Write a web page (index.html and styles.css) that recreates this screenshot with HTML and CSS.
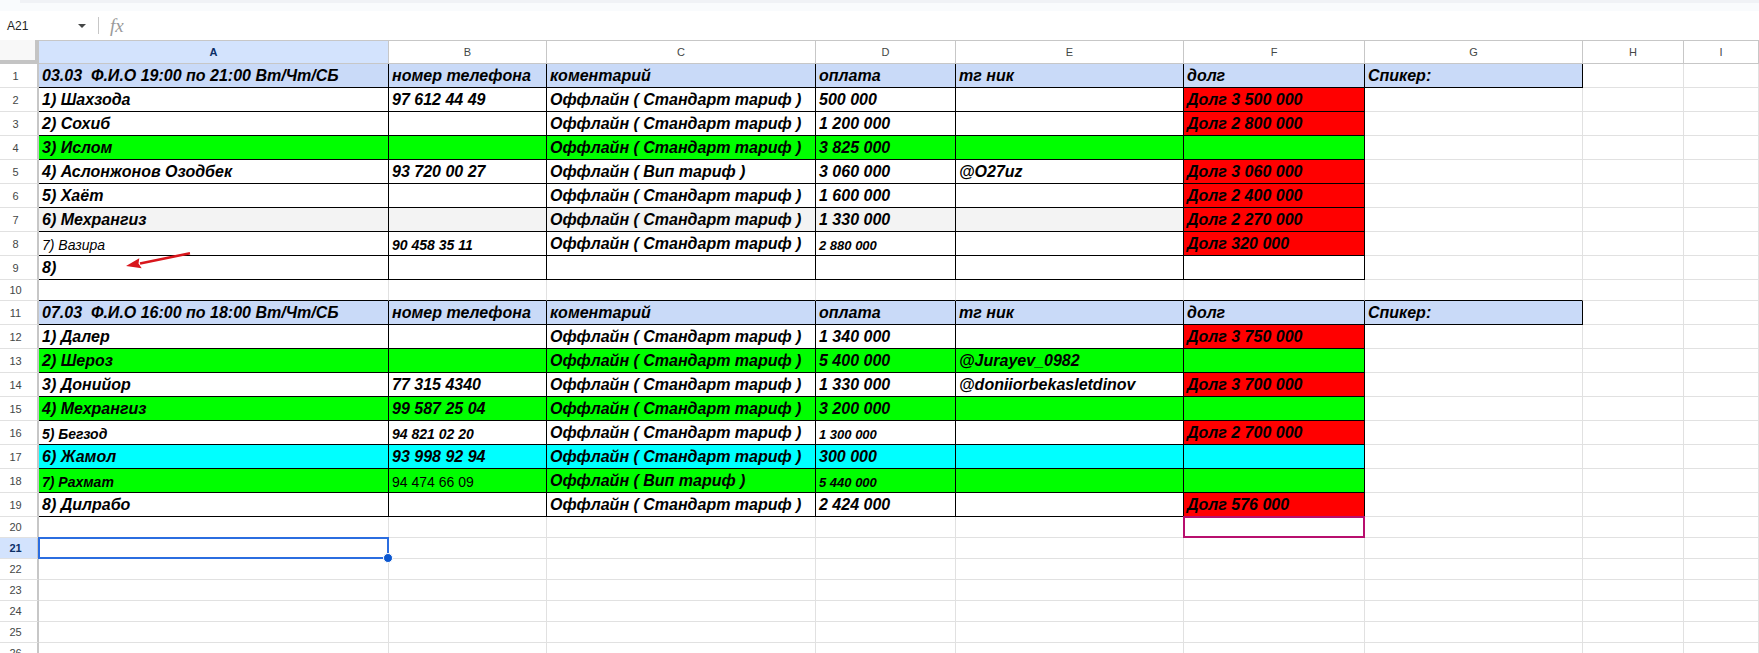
FILE: index.html
```html
<!DOCTYPE html>
<html lang="ru">
<head>
    <meta charset="UTF-8">
    <meta name="viewport" content="width=device-width, initial-scale=1">
    <title>Таблица</title>
    <link rel="stylesheet" href="styles.css">
</head>
<body>
    <div class="top-strip"><div class="top-strip-inner"></div></div>

    <div class="formula-bar">
        <div class="name-box">A21</div>
        <div class="name-arrow"></div>
        <div class="formula-sep"></div>
        <div class="fx">fx</div>
    </div>

    <table class="sheet">
        <colgroup>
            <col class="w-head"><col class="w-a"><col class="w-b"><col class="w-c"><col class="w-d">
            <col class="w-e"><col class="w-f"><col class="w-g"><col class="w-h"><col class="w-i">
        </colgroup>
        <thead>
            <tr>
                <th class="corner"></th>
                <th class="on">A</th><th>B</th><th>C</th><th>D</th><th>E</th><th>F</th><th>G</th><th>H</th><th>I</th>
            </tr>
        </thead>
        <tbody>
            <tr>
                <td class="num">1</td>
                <td class="k blue">03.03&nbsp; Ф.И.О 19:00 по 21:00 Вт/Чт/СБ</td><td class="k blue">номер телефона</td><td class="k blue">коментарий</td><td class="k blue">оплата</td><td class="k blue">тг ник</td><td class="k blue">долг</td><td class="k blue">Спикер:</td><td></td><td></td>
            </tr>
            <tr>
                <td class="num">2</td>
                <td class="k">1) Шахзода</td><td class="k">97 612 44 49</td><td class="k">Оффлайн ( Стандарт тариф )</td><td class="k">500 000</td><td class="k"></td><td class="k red">Долг 3 500 000</td><td></td><td></td><td></td>
            </tr>
            <tr>
                <td class="num">3</td>
                <td class="k">2) Сохиб</td><td class="k"></td><td class="k">Оффлайн ( Стандарт тариф )</td><td class="k">1 200 000</td><td class="k"></td><td class="k red">Долг 2 800 000</td><td></td><td></td><td></td>
            </tr>
            <tr>
                <td class="num">4</td>
                <td class="k green">3) Ислом</td><td class="k green"></td><td class="k green">Оффлайн ( Стандарт тариф )</td><td class="k green">3 825 000</td><td class="k green"></td><td class="k green"></td><td></td><td></td><td></td>
            </tr>
            <tr>
                <td class="num">5</td>
                <td class="k">4) Аслонжонов Озодбек</td><td class="k">93 720 00 27</td><td class="k">Оффлайн ( Вип тариф )</td><td class="k">3 060 000</td><td class="k">@O27uz</td><td class="k red">Долг 3 060 000</td><td></td><td></td><td></td>
            </tr>
            <tr>
                <td class="num">6</td>
                <td class="k">5) Хаёт</td><td class="k"></td><td class="k">Оффлайн ( Стандарт тариф )</td><td class="k">1 600 000</td><td class="k"></td><td class="k red">Долг 2 400 000</td><td></td><td></td><td></td>
            </tr>
            <tr>
                <td class="num">7</td>
                <td class="k grey">6) Мехрангиз</td><td class="k grey"></td><td class="k grey">Оффлайн ( Стандарт тариф )</td><td class="k grey">1 330 000</td><td class="k grey"></td><td class="k red">Долг 2 270 000</td><td></td><td></td><td></td>
            </tr>
            <tr>
                <td class="num">8</td>
                <td class="k small thin">7) Вазира</td><td class="k small">90 458 35 11</td><td class="k">Оффлайн ( Стандарт тариф )</td><td class="k small tiny">2 880 000</td><td class="k"></td><td class="k red">Долг 320 000</td><td></td><td></td><td></td>
            </tr>
            <tr>
                <td class="num">9</td>
                <td class="k has-over">8)
                    <svg class="arrow" width="70" height="18" viewBox="0 0 70 18">
                        <path d="M65 1.3L15 11.5" stroke="#d8161c" stroke-width="2.6" fill="none"/>
                        <path d="M1 14L14.3 6.3L13.5 11.5L16.7 16.3Z" fill="#d8161c"/>
                    </svg>
                </td><td class="k"></td><td class="k"></td><td class="k"></td><td class="k"></td><td class="k"></td><td></td><td></td><td></td>
            </tr>
            <tr class="short">
                <td class="num">10</td>
                <td class="k-b"></td><td class="k-b"></td><td class="k-b"></td><td class="k-b"></td><td class="k-b"></td><td class="k-b"></td><td class="k-b"></td><td></td><td></td>
            </tr>
            <tr>
                <td class="num">11</td>
                <td class="k blue">07.03&nbsp; Ф.И.О 16:00 по 18:00 Вт/Чт/СБ</td><td class="k blue">номер телефона</td><td class="k blue">коментарий</td><td class="k blue">оплата</td><td class="k blue">тг ник</td><td class="k blue">долг</td><td class="k blue">Спикер:</td><td></td><td></td>
            </tr>
            <tr>
                <td class="num">12</td>
                <td class="k">1) Далер</td><td class="k"></td><td class="k">Оффлайн ( Стандарт тариф )</td><td class="k">1 340 000</td><td class="k"></td><td class="k red">Долг 3 750 000</td><td></td><td></td><td></td>
            </tr>
            <tr>
                <td class="num">13</td>
                <td class="k green">2) Шероз</td><td class="k green"></td><td class="k green">Оффлайн ( Стандарт тариф )</td><td class="k green">5 400 000</td><td class="k green">@Jurayev_0982</td><td class="k green"></td><td></td><td></td><td></td>
            </tr>
            <tr>
                <td class="num">14</td>
                <td class="k">3) Донийор</td><td class="k">77 315 4340</td><td class="k">Оффлайн ( Стандарт тариф )</td><td class="k">1 330 000</td><td class="k">@doniiorbekasletdinov</td><td class="k red">Долг 3 700 000</td><td></td><td></td><td></td>
            </tr>
            <tr>
                <td class="num">15</td>
                <td class="k green">4) Мехрангиз</td><td class="k green">99 587 25 04</td><td class="k green">Оффлайн ( Стандарт тариф )</td><td class="k green">3 200 000</td><td class="k green"></td><td class="k green"></td><td></td><td></td><td></td>
            </tr>
            <tr>
                <td class="num">16</td>
                <td class="k small">5) Бегзод</td><td class="k small">94 821 02 20</td><td class="k">Оффлайн ( Стандарт тариф )</td><td class="k small tiny">1 300 000</td><td class="k"></td><td class="k red">Долг 2 700 000</td><td></td><td></td><td></td>
            </tr>
            <tr>
                <td class="num">17</td>
                <td class="k cyan">6) Жамол</td><td class="k cyan">93 998 92 94</td><td class="k cyan">Оффлайн ( Стандарт тариф )</td><td class="k cyan">300 000</td><td class="k cyan"></td><td class="k cyan"></td><td></td><td></td><td></td>
            </tr>
            <tr>
                <td class="num">18</td>
                <td class="k green small">7) Рахмат</td><td class="k green small plain">94 474 66 09</td><td class="k green">Оффлайн ( Вип тариф )</td><td class="k green small tiny">5 440 000</td><td class="k green"></td><td class="k green"></td><td></td><td></td><td></td>
            </tr>
            <tr>
                <td class="num">19</td>
                <td class="k">8) Дилрабо</td><td class="k"></td><td class="k">Оффлайн ( Стандарт тариф )</td><td class="k">2 424 000</td><td class="k"></td><td class="k red">Долг 576 000</td><td></td><td></td><td></td>
            </tr>
            <tr class="short">
                <td class="num">20</td>
                <td></td><td></td><td></td><td></td><td></td><td class="has-over"><div class="peer-cursor"></div></td><td></td><td></td><td></td>
            </tr>
            <tr class="short">
                <td class="num on">21</td>
                <td class="has-over"><div class="selection"><span class="handle"></span></div></td><td></td><td></td><td></td><td></td><td></td><td></td><td></td><td></td>
            </tr>
            <tr class="short"><td class="num">22</td><td></td><td></td><td></td><td></td><td></td><td></td><td></td><td></td><td></td></tr>
            <tr class="short"><td class="num">23</td><td></td><td></td><td></td><td></td><td></td><td></td><td></td><td></td><td></td></tr>
            <tr class="short"><td class="num">24</td><td></td><td></td><td></td><td></td><td></td><td></td><td></td><td></td><td></td></tr>
            <tr class="short"><td class="num">25</td><td></td><td></td><td></td><td></td><td></td><td></td><td></td><td></td><td></td></tr>
            <tr class="short"><td class="num">26</td><td></td><td></td><td></td><td></td><td></td><td></td><td></td><td></td><td></td></tr>
        </tbody>
    </table>
</body>
</html>
```

FILE: styles.css
```css
html, body {
    margin: 0;
    height: 100%;
    overflow: hidden;
    background: #fff;
}
body {
    font-family: "Liberation Sans", Arial, sans-serif;
}

.top-strip {
    height: 11px;
    background: #f9fbfd;
}
.top-strip-inner {
    height: 3px;
    margin-left: 20px;
    background: #f0f2f6;
}

.formula-bar {
    display: flex;
    align-items: center;
    height: 29px;
    color: #444746;
}
.name-box {
    width: 71px;
    padding-left: 7px;
    font-size: 12px;
    color: #1f1f1f;
}
.name-arrow {
    width: 0;
    height: 0;
    border-left: 4px solid transparent;
    border-right: 4px solid transparent;
    border-top: 4px solid #444746;
}
.formula-sep {
    width: 1px;
    height: 17px;
    margin-left: 12px;
    background: #c7c7c7;
}
.fx {
    margin-left: 11px;
    font-family: "Liberation Serif", serif;
    font-style: italic;
    font-size: 19px;
    color: #9a9a9a;
}

.sheet {
    table-layout: fixed;
    width: 1759px;
    border-collapse: separate;
    border-spacing: 0;
}
.w-head { width: 39px; }
.w-a { width: 350px; }
.w-b { width: 158px; }
.w-c { width: 269px; }
.w-d { width: 140px; }
.w-e { width: 228px; }
.w-f { width: 181px; }
.w-g { width: 218px; }
.w-h { width: 101px; }
.w-i { width: 75px; }

th {
    height: 24px;
    padding: 0;
    box-sizing: border-box;
    border-top: 1px solid #c7c7c7;
    border-right: 1px solid #c7c7c7;
    border-bottom: 1px solid #c7c7c7;
    font-size: 11px;
    font-weight: normal;
    color: #444746;
}
th.on {
    background: #d3e3fd;
    font-weight: bold;
    color: #0b2f66;
}
th.corner {
    background: #f8f8f8;
    border-top: 0;
    border-right: 4px solid #c4c4c4;
    border-bottom: 4px solid #c4c4c4;
}

tr {
    height: 24px;
}
tr.short {
    height: 21px;
}
td {
    box-sizing: border-box;
    padding: 0 3px;
    border-right: 1px solid #e1e1e1;
    border-bottom: 1px solid #e1e1e1;
    white-space: nowrap;
    overflow: hidden;
    font-size: 16px;
    font-weight: bold;
    font-style: italic;
    color: #000;
}
td.num {
    padding: 0 6px 0 0;
    text-align: center;
    font-size: 11px;
    font-weight: normal;
    font-style: normal;
    color: #444746;
    border-right: 2px solid #c7c7c7;
}
td.num.on {
    background: #d3e3fd;
    font-weight: bold;
    color: #0b2f66;
}

/* цвета ячеек */
.k { border-right-color: #000; border-bottom-color: #000; }
.k-b { border-bottom-color: #000; }
.blue { background: #c9daf8; }
.red { background: #f00; }
.green { background: #0f0; }
.cyan { background: #0ff; }
.grey { background: #f3f3f3; }

td.small {
    vertical-align: bottom;
    padding-bottom: 2px;
    font-size: 14px;
}
td.tiny { font-size: 13px; }
td.thin { font-weight: normal; }
td.plain {
    font-weight: normal;
    font-style: normal;
}

.has-over {
    position: relative;
    overflow: visible;
}
.arrow {
    position: absolute;
    left: 86px;
    top: -4px;
}
.selection {
    position: absolute;
    left: -1px;
    top: -1px;
    right: -1px;
    bottom: -1px;
    border: 2px solid #2b6de0;
}
.handle {
    position: absolute;
    right: -6px;
    bottom: -6px;
    width: 8px;
    height: 8px;
    border-radius: 50%;
    background: #0b57d0;
    border: 1px solid #fff;
}
.peer-cursor {
    position: absolute;
    left: -1px;
    top: -1px;
    right: -1px;
    bottom: -1px;
    border: 2px solid #b80f6e;
}
```
